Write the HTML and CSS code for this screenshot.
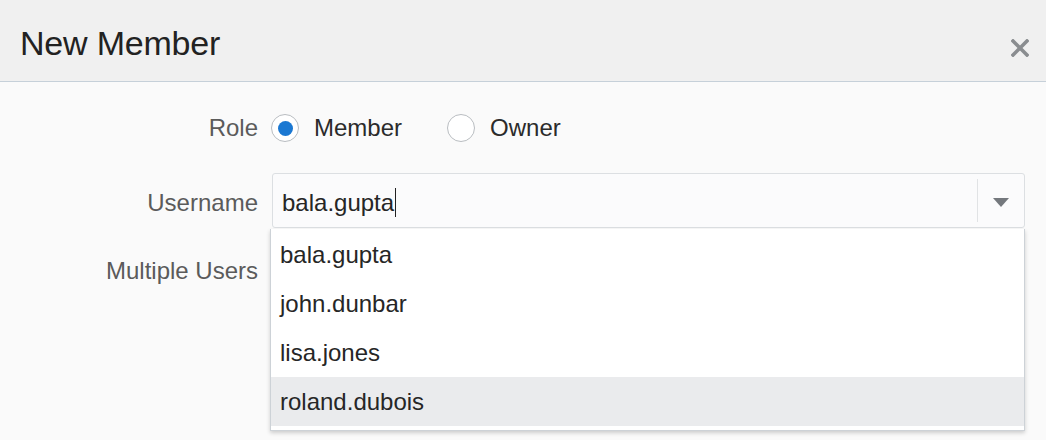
FILE: index.html
```html
<!DOCTYPE html>
<html>
<head>
<meta charset="utf-8">
<link rel="stylesheet" href="styles.css">
</head>
<body>
<div class="dialog">
  <div class="header">
    <h1 class="title">New Member</h1>
    <div class="close">
      <svg width="18" height="18" viewBox="0 0 18 18"><path d="M2 2 L16 16 M16 2 L2 16" stroke="#8a8d90" stroke-width="3.6" stroke-linecap="square" fill="none"/></svg>
    </div>
  </div>
  <div class="form">
    <div class="row row-role">
      <div class="label">Role</div>
      <div class="control radios">
        <div class="radio-item"><span class="radio checked"><span class="dot"></span></span><span class="radio-text">Member</span></div>
        <div class="radio-item"><span class="radio"></span><span class="radio-text">Owner</span></div>
      </div>
    </div>
    <div class="row row-user">
      <div class="label label-user">Username</div>
      <div class="control combo-wrap">
        <div class="combo">
          <div class="combo-text"><span>bala.gupta</span><span class="caret"></span></div>
          <div class="combo-sep"></div>
          <div class="combo-arrow"><svg width="16" height="9" viewBox="0 0 16 9"><path d="M0 0 H16 L8 9 Z" fill="#74787d"/></svg></div>
        </div>
        <ul class="dropdown">
          <li class="opt">bala.gupta</li>
          <li class="opt">john.dunbar</li>
          <li class="opt">lisa.jones</li>
          <li class="opt active">roland.dubois</li>
        </ul>
      </div>
    </div>
    <div class="row row-multi">
      <div class="label">Multiple Users</div>
      <div class="control"></div>
    </div>
  </div>
</div>
</body>
</html>
```
FILE: styles.css
```css
html, body {
  margin: 0;
  padding: 0;
  background: #fafafa;
  font-family: "Liberation Sans", Arial, Helvetica, sans-serif;
}
.dialog {
  width: 1046px;
  height: 440px;
  overflow: hidden;
  background: #fafafa;
}
.header {
  height: 81px;
  background: #f0f0f0;
  border-bottom: 1px solid #c6d0d9;
  display: flex;
  justify-content: space-between;
  align-items: flex-start;
  padding: 0 17px 0 20px;
  box-sizing: content-box;
}
.title {
  margin: 0;
  padding-top: 24px;
  font-size: 34px;
  font-weight: normal;
  color: #222222;
  line-height: 38px;
  letter-spacing: -0.2px;
}
.close {
  margin-top: 39px;
  width: 18px;
  height: 18px;
  display: flex;
}
.form {
  padding-top: 26px;
  display: flex;
  flex-direction: column;
}
.row {
  display: grid;
  grid-template-columns: 258px 1fr;
  column-gap: 13px;
  align-items: center;
}
.label {
  text-align: right;
  font-size: 24px;
  color: #5b5b5b;
}
.row-role { height: 40px; }
.row-user { height: 55px; margin-top: 25px; }
.row-multi { height: 40px; margin-top: 23px; }
.label-user { margin-top: 4px; }
.control { padding-right: 21px; }
.radios {
  display: flex;
  align-items: center;
}
.radio-item {
  display: flex;
  align-items: center;
  margin-right: 45px;
}
.radio {
  width: 28px;
  height: 28px;
  box-sizing: border-box;
  border: 1.5px solid #b9bdc1;
  border-radius: 50%;
  background: #ffffff;
  display: flex;
  align-items: center;
  justify-content: center;
  margin-right: 15px;
}
.dot {
  width: 15px;
  height: 15px;
  border-radius: 50%;
  background: #1b78d2;
}
.radio-text {
  font-size: 24px;
  color: #2b2b2b;
}
.combo-wrap {
  position: relative;
  height: 55px;
}
.combo {
  height: 55px;
  box-sizing: border-box;
  border: 1px solid #dcdfe2;
  border-radius: 3px;
  background: #fbfbfc;
  display: flex;
  align-items: center;
  margin-left: 1px;
}
.combo-text {
  flex: 1;
  padding-left: 9px;
  padding-top: 4px;
  font-size: 24px;
  color: #262626;
  display: flex;
  align-items: center;
}
.caret {
  display: inline-block;
  width: 0;
  height: 29px;
  border-left: 1px solid #222;
  margin-left: 1px;
}
.combo-sep {
  width: 1px;
  height: 43px;
  background: #e1e3e5;
}
.combo-arrow {
  width: 46px;
  display: flex;
  justify-content: center;
  align-items: center;
  padding-top: 3px;
}
.dropdown {
  position: absolute;
  left: -1px;
  right: 21px;
  top: 56px;
  margin: 0;
  padding: 1px 0 4px;
  list-style: none;
  background: #ffffff;
  border: 1px solid #cdd2d7;
  border-top: none;
  box-shadow: 0 2px 4px rgba(0, 0, 0, 0.18);
}
.opt {
  height: 49px;
  line-height: 50px;
  padding-left: 9px;
  font-size: 24px;
  color: #262626;
}
.opt.active {
  background: #eaebed;
}
```
